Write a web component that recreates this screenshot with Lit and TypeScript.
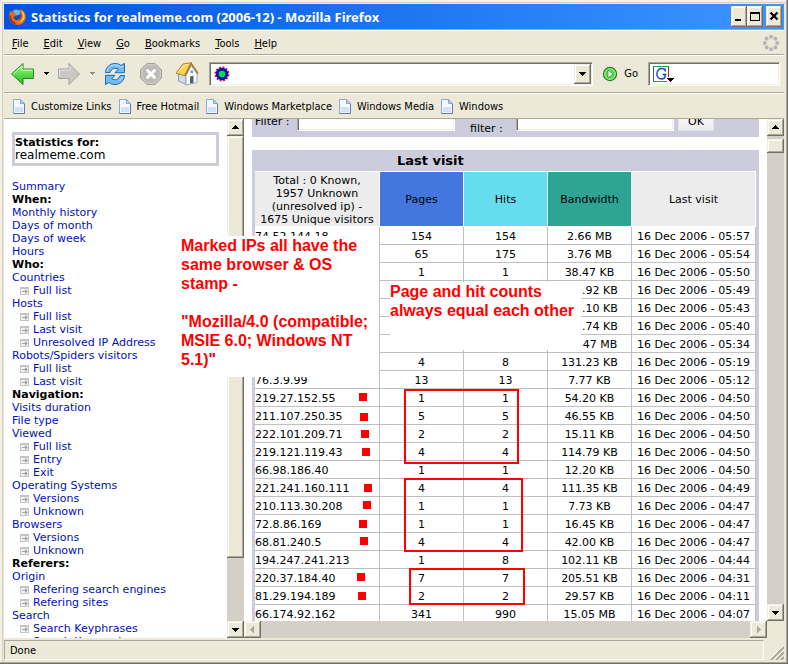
import { LitElement, html, css, svg } from "lit";
import { customElement, property } from "lit/decorators.js";
import { classMap } from "lit/directives/class-map.js";

type NavItem = { text: string; kind: "head" | "link" | "sub" };

const head = (text: string): NavItem => ({ text, kind: "head" });
const link = (text: string): NavItem => ({ text, kind: "link" });
const sub = (text: string): NavItem => ({ text, kind: "sub" });

const NAV: NavItem[] = [
  link("Summary"),
  head("When:"),
  link("Monthly history"),
  link("Days of month"),
  link("Days of week"),
  link("Hours"),
  head("Who:"),
  link("Countries"),
  sub("Full list"),
  link("Hosts"),
  sub("Full list"),
  sub("Last visit"),
  sub("Unresolved IP Address"),
  link("Robots/Spiders visitors"),
  sub("Full list"),
  sub("Last visit"),
  head("Navigation:"),
  link("Visits duration"),
  link("File type"),
  link("Viewed"),
  sub("Full list"),
  sub("Entry"),
  sub("Exit"),
  link("Operating Systems"),
  sub("Versions"),
  sub("Unknown"),
  link("Browsers"),
  sub("Versions"),
  sub("Unknown"),
  head("Referers:"),
  link("Origin"),
  sub("Refering search engines"),
  sub("Refering sites"),
  link("Search"),
  sub("Search Keyphrases"),
  sub("Search Keywords"),
];

// Figure spaces keep the digits lined up where the notes hide part of a value.
const ROWS: [string, string, string, string, string][] = [
  ["74.52.144.18", "154", "154", "2.66 MB", "05:57"],
  ["", "65", "175", "3.76 MB", "05:54"],
  ["", "1", "1", "38.47 KB", "05:50"],
  ["", "", "", "\u2007\u2007\u2007.92 KB", "05:49"],
  ["", "", "", "\u2007\u2007\u2007.10 KB", "05:43"],
  ["", "", "", "\u2007\u2007\u2007.74 KB", "05:40"],
  ["", "", "", "\u2007\u2007\u200747 MB", "05:34"],
  ["", "4", "8", "131.23 KB", "05:19"],
  ["76.3.9.99", "13", "13", "7.77 KB", "05:12"],
  ["219.27.152.55", "1", "1", "54.20 KB", "04:50"],
  ["211.107.250.35", "5", "5", "46.55 KB", "04:50"],
  ["222.101.209.71", "2", "2", "15.11 KB", "04:50"],
  ["219.121.119.43", "4", "4", "114.79 KB", "04:50"],
  ["66.98.186.40", "1", "1", "12.20 KB", "04:50"],
  ["221.241.160.111", "4", "4", "111.35 KB", "04:49"],
  ["210.113.30.208", "1", "1", "7.73 KB", "04:47"],
  ["72.8.86.169", "1", "1", "16.45 KB", "04:47"],
  ["68.81.240.5", "4", "4", "42.00 KB", "04:47"],
  ["194.247.241.213", "1", "8", "102.11 KB", "04:44"],
  ["220.37.184.40", "7", "7", "205.51 KB", "04:31"],
  ["81.29.194.189", "2", "2", "29.57 KB", "04:11"],
  ["66.174.92.162", "341", "990", "15.05 MB", "04:07"],
];

const MARKS = [
  [355, 274], [356, 294], [357, 311], [358, 329], [360, 365],
  [359, 382], [355, 401], [356, 418], [353, 454], [354, 473],
];

const BOXES = [
  [401, 271, 113, 73],
  [401, 360, 117, 72],
  [406, 450, 114, 35],
];

const raised = css`
  .raised {
    border: 0;
    padding: 0;
    margin: 0;
    background: #ece9d8;
    box-shadow: inset -1px -1px #716f64, inset 1px 1px #f1efe2,
      inset -2px -2px #aca899, inset 2px 2px #fff;
  }
`;

@customElement("scroll-bar")
export class ScrollBar extends LitElement {
  @property() axis: "x" | "y" = "y";
  @property({ type: Number }) start = 0;
  @property({ type: Number }) size = 0;

  static styles = [
    raised,
    css`
      :host { display: flex; background: #d4d0c8; flex: none; }
      :host([axis="y"]) { flex-direction: column; width: 17px; }
      :host([axis="x"]) { height: 17px; }
      button { flex: none; width: 17px; height: 17px; display: block; }
      svg { display: block; width: 17px; height: 17px; fill: #000; }
      :host([axis="x"]) svg { fill: #aca899; }
      .track { flex: 1; min-height: 0; }
    `,
  ];

  render() {
    const y = this.axis === "y";
    return html`
      <button class="raised" aria-label=${y ? "Scroll up" : "Scroll left"}>
        <svg viewBox="0 0 17 17"><path d=${y ? "M8 6h1v1h1v1h1v1h1v1H5V9h1V8h1V7h1z" : "M6 8v1h1v1h1v1h1v1h1V5H9v1H8v1H7v1z"} /></svg>
      </button>
      <div class="track">
        ${this.size
          ? html`<div class="raised" style=${`height:${this.size}%;margin-top:${this.start}px`}></div>`
          : ""}
      </div>
      <button class="raised" aria-label=${y ? "Scroll down" : "Scroll right"}>
        <svg viewBox="0 0 17 17"><path d=${y ? "M8 11h1v-1h1V9h1V8h1V7H5v1h1v1h1v1h1z" : "M11 8v1h-1v1H9v1H8v1H7V5h1v1h1v1h1v1z"} /></svg>
      </button>
    `;
  }
}

const firefox = svg`
  <circle cx="7.500" cy="7.500" r="7" fill="#1f4aa8"/>
  <path d="M3.500 2.600a6.500 6.500 0 0 1 7.500.2L10.500 6 6 7.200z" fill="#6db6ee"/>
  <path d="M.8 2.800l1.700 1L4 2.500l.3 2.300L6.800 6 5.600 7.500 4.300 8.600c.3 2.400 3 3.400 5 2.300 2.300-1.100 2.800-3.300 2-6.200L10 1.200C13.500 1.600 16 5 15.800 8.600 15.500 12.900 12 16 8 16 3.500 16 .1 12.500.1 8.300.1 6.500.1 5 .8 2.800z" fill="#e66b12"/>
  <path d="M11.200 1.800c3.500 2 4.600 6.500 2.400 9.600-1.500 2.100-3.600 3-5.600 2.700 3.200-.8 5-2.900 5-6 0-2.300-.6-4.400-1.800-6.300z" fill="#ffd24a"/>
  <path d="M1.200 7c-.2 3.500 1.500 6.500 4.800 7.800" stroke="#9c2a0b" stroke-width="1.400" fill="none"/>`;

const page = svg`
  <path d="M1.500.5h7l4 4v10h-11z" fill="#f4f8ff" stroke="#8aa8da"/>
  <path d="M3 8h8v5H3z" fill="#d3e1fa"/>
  <path d="M8.500.5v4h4z" fill="#b7cdf3" stroke="#8aa8da"/>
  <path d="M12.500 5v9.500h-11" fill="none" stroke="#6079b4"/>`;

@customElement("app-root")
export class AppRoot extends LitElement {
  static styles = [
    raised,
    css`
      :host { display: block; }
      * { box-sizing: border-box; }
      svg { display: block; flex: none; }
      button { font: inherit; color: inherit; }
      a { color: inherit; text-decoration: none; }
      .window {
        height: 100vh;
        min-height: 480px;
        display: flex;
        flex-direction: column;
        padding: 4px;
        background: #ece9d8;
        box-shadow: inset -1px -1px #716f64, inset -2px -2px #aca899,
          inset 2px 2px #f3f1e6, inset 3px 3px #d4d0bc;
        font: 11px/13px "DejaVu Sans Condensed", "DejaVu Sans", sans-serif;
        color: #000;
      }
      .title {
        flex: none;
        height: 25px;
        display: flex;
        align-items: center;
        padding: 0 2px 0 5px;
        background: linear-gradient(90deg, #0054e3, #3d95ff);
        color: #fff;
        font: bold 13px/16px "Noto Sans", sans-serif;
      }
      .title h1 { flex: 1; margin: 0 0 0 5px; font: inherit; white-space: nowrap; }
      .wbtn { width: 16px; height: 21px; }
      .close { margin-left: 3px; }
      .bar {
        flex: none;
        display: flex;
        align-items: center;
        border-bottom: 1px solid #aca899;
        box-shadow: inset 0 1px #fff;
        white-space: nowrap;
      }
      .menu { height: 26px; padding: 2px 4px 0 8px; gap: 15px; border-top: 1px solid #aca899; }
      .menu button { border: 0; padding: 0; background: none; }
      .first { text-decoration: underline; }
      .spacer { flex: 1; }
      .nav { height: 38px; padding: 0 4px 0 7px; }
      .icon { border: 0; padding: 0; background: none; flex: none; }
      .drop { width: 22px; display: flex; justify-content: center; }
      .reload { margin-right: 12px; }
      .stop { margin-right: 12px; }
      .home { margin-right: 10px; }
      .field {
        display: flex;
        align-items: center;
        height: 24px;
        background: #fff;
        border: 1px solid;
        border-color: #aca899 #fff #fff #aca899;
        box-shadow: inset 1px 1px #716f64, inset -1px -1px #f1efe2;
      }
      .field input { flex: 1; min-width: 0; border: 0; background: none; font: inherit; outline: 0; }
      .url { flex: 1; padding: 1px 1px 1px 4px; }
      .url .raised { width: 17px; height: 20px; display: flex; align-items: center; justify-content: center; }
      .go { display: flex; align-items: center; gap: 6px; margin: 0 10px 0 9px; }
      .search { width: 132px; padding-left: 4px; }
      .links { height: 26px; padding: 2px 8px 0; gap: 6px; }
      .links a { display: flex; align-items: center; gap: 6px; }
      .content { position: relative; flex: 1; min-height: 0; display: flex; background: #fff; }
      .left { width: 240px; flex: none; display: flex; }
      .side {
        flex: 1;
        overflow: hidden;
        padding: 13px 8px 0;
        font: 11px/13px "DejaVu Sans", sans-serif;
      }
      .site {
        border: 3px solid #ccccdd;
        height: 34px;
        padding: 1px 0 0;
        margin-bottom: 14px;
        font-size: 12px;
      }
      .site b { display: block; font-size: 11px; }
      .side ul { list-style: none; margin: 0; padding: 0; white-space: nowrap; }
      .side li { display: flex; align-items: center; height: 13px; color: #0011bb; }
      .side .head { color: #000; font-weight: bold; }
      .side .sub { padding-left: 8px; gap: 4px; }
      .right { flex: 1; min-width: 0; display: flex; }
      .vbar { flex: none; display: flex; padding-bottom: 17px; background: #ece9d8; }
      .view { flex: 1; min-width: 0; display: flex; flex-direction: column; }
      .doc {
        flex: 1;
        min-height: 0;
        overflow: hidden;
        padding: 0 8px;
        font: 11px/13px "DejaVu Sans", sans-serif;
      }
      .filter {
        display: flex;
        align-items: flex-end;
        height: 18px;
        padding: 0 3px 6px;
        margin-bottom: 13px;
        background: #ccccdd;
        white-space: nowrap;
      }
      .filter label { flex: none; }
      .filter input {
        width: 158px;
        height: 22px;
        flex: none;
        border: 1px solid;
        border-color: #aca899 #fff #fff #aca899;
        box-shadow: inset 1px 1px #716f64, inset -1px -1px #f1efe2;
        background: #fff;
      }
      .lab1 { width: 42px; margin-bottom: 3px; }
      .lab2 { width: 46px; margin: 0 0 -4px 15px; }
      .ok {
        width: 36px;
        height: 22px;
        margin-left: 4px;
        padding: 4px 0 2px;
        border: 1px solid #dde3ea;
        background: linear-gradient(#fff, #ececf0);
        flex: none;
      }
      .panel { background: #ccccdd; padding: 0 3px 3px; }
      .panel h2 { margin: 0; width: 70%; height: 21px; font: bold 13px/21px "DejaVu Sans", sans-serif; text-align: center; }
      table { width: 100%; table-layout: fixed; border-collapse: separate; border-spacing: 0; background: #fff; }
      th {
        height: 56px;
        padding: 1px 0 0;
        font-weight: normal;
        border-top: 1px solid #fff;
        border-right: 1px solid #fff;
        border-bottom: 1px solid #fff;
        background: #ececec;
      }
      .c-host { width: 125px; }
      .c-num { width: 84px; }
      .c-date { width: 124px; }
      .pages { background: #4477dd; }
      .hits { background: #66ddee; }
      .bw { background: #2ea495; }
      td {
        height: 18px;
        padding: 2px 0 0;
        line-height: 15px;
        text-align: center;
        white-space: nowrap;
        border-right: 1px solid #c0c0c0;
        border-bottom: 1px solid #c0c0c0;
      }
      .host { text-align: left; }
      .note {
        position: absolute;
        background: #fff;
        color: #ff0000;
        font: bold 16px/19px "Liberation Sans", Arial, sans-serif;
      }
      .note p { margin: 0 0 19px; }
      .n1 { left: 174px; top: 117px; width: 201px; height: 141px; padding: 0 0 0 3px; }
      .n2 { left: 386px; top: 163px; width: 191px; height: 68px; white-space: nowrap; }
      .marks { position: absolute; left: 0; top: 0; pointer-events: none; }
      .status { flex: none; height: 22px; display: flex; padding-top: 2px; }
      .status p {
        flex: 1;
        margin: 0;
        padding: 3px 5px 0;
        border: 1px solid;
        border-color: #aca899 #fff #fff #aca899;
      }
      .grip { align-self: flex-end; margin-left: 6px; }
    `,
  ];

  private menu(name: string) {
    return html`<button><span class="first">${name[0]}</span>${name.slice(1)}</button>`;
  }

  private chrome() {
    return html`
      <header class="title">
        <svg width="17" height="17" viewBox="0 0 16 16">${firefox}</svg>
        <h1>Statistics for realmeme.com (2006-12) - Mozilla Firefox</h1>
        <button class="raised wbtn" aria-label="Minimize">
          <svg width="16" height="21"><path d="M4 13h6v2H4z" /></svg>
        </button>
        <button class="raised wbtn" aria-label="Maximize">
          <svg width="16" height="21"><path d="M3 6h10v9H3zM4 8v6h8V8z" fill-rule="evenodd" /></svg>
        </button>
        <button class="raised wbtn close" aria-label="Close">
          <svg width="16" height="21"><path d="M4.500 6.500l7 7M11.500 6.500l-7 7" stroke="#000" stroke-width="2.200" /></svg>
        </button>
      </header>
      <nav class="bar menu">
        ${["File", "Edit", "View", "Go", "Bookmarks", "Tools", "Help"].map((m) => this.menu(m))}
        <span class="spacer"></span>
        <svg width="18" height="18" viewBox="-9 -9 18 18" fill="#b5b5b5">
          ${[0, 45, 90, 135, 180, 225, 270, 315].map((a) => svg`<circle cx="0" cy="-6.200" r="2" transform=${`rotate(${a})`} />`)}
        </svg>
      </nav>
      <div class="bar nav">
        <button class="icon" aria-label="Back">
          <svg width="24" height="24" viewBox="0 0 24 24">
            <defs><linearGradient id="g" x1="0" y1="0" x2="0" y2="1"><stop offset="0" stop-color="#b6f5a0" /><stop offset=".5" stop-color="#5fdc4e" /><stop offset="1" stop-color="#27b51d" /></linearGradient></defs>
            <path d="M.5 12L12 1.500V7h10.500v9.500H12v6z" fill="url(#g)" stroke="#1d8c1a" />
            <path d="M2.500 12L11 4v4.200h10.500" fill="none" stroke="#d9ffd0" />
          </svg>
        </button>
        <button class="icon drop" aria-label="Back history"><svg width="5" height="3"><path d="M0 0h5v1H4v1H3v1H2V2H1V1H0z" /></svg></button>
        <button class="icon" aria-label="Forward">
          <svg width="24" height="24" viewBox="0 0 24 24">
            <path d="M22.500 12L12 1.500V7H1.500v9.500H12v6z" fill="#c9c8c3" stroke="#a3a29c" />
            <path d="M2.500 15V8.200H13V4" fill="none" stroke="#e4e3de" />
          </svg>
        </button>
        <button class="icon drop" aria-label="Forward history"><svg width="5" height="3" fill="#8f8e88"><path d="M0 0h5v1H4v1H3v1H2V2H1V1H0z" /></svg></button>
        <button class="icon reload" aria-label="Reload">
          <svg width="24" height="24" viewBox="0 0 24 24" fill="#6fbdf2" stroke="#1f66b8" stroke-linejoin="round">
            <path d="M2.500 10.500C3 5 7 1.500 12 1.500c2.600 0 4.400.7 6 2l3.500-2.200v9.400H12l3.300-3.300C12 5.200 8 6.500 7 10.500z" />
            <path d="M21.500 13.500C21 19 17 22.500 12 22.500c-2.600 0-4.400-.7-6-2l-3.500 2.200v-9.400H12l-3.300 3.300c3.300 2.200 7.300.9 8.300-3.100z" />
            <path d="M4 9.500C5 5 8 3 12 3c2.500 0 4.500.8 6 2.300l2-1.300M20 14.500c-1 2-2 3-3.500 4" fill="none" stroke="#c4e8ff" />
          </svg>
        </button>
        <button class="icon stop" aria-label="Stop">
          <svg width="24" height="24" viewBox="0 0 24 24">
            <path d="M8 1.500h8L22.500 8v8L16 22.500H8L1.500 16V8z" fill="#bcbbb7" stroke="#a09f9a" />
            <path d="M8.300 2.800h7.400l5.500 5.500v7.400l-5.500 5.500H8.300l-5.500-5.500V8.300z" fill="none" stroke="#d2d1cd" />
            <path d="M8.500 8.500l7 7M15.500 8.500l-7 7" stroke="#fff" stroke-width="3" stroke-linecap="round" />
          </svg>
        </button>
        <button class="icon home" aria-label="Home">
          <svg width="24" height="24" viewBox="0 0 24 24">
            <path d="M3.500 11v8l7.500 3.500V13z" fill="#d3dbec" stroke="#8e98ae" />
            <path d="M11 13l5.500-9 5.500 8v8.500l-11 2.500z" fill="#fbfcff" stroke="#a2aabc" />
            <path d="M1 11L8 2l8-1.200-6.500 13z" fill="#f7d257" stroke="#b1851b" />
            <path d="M3 10.500L8.800 3.300l5-.8" fill="none" stroke="#fff0a8" />
            <path d="M10 14L16.200 1.500 23 11.500" fill="none" stroke="#a9791c" stroke-width="1.500" />
            <path d="M15 14.500l3.500-.7v7L15 21.500z" fill="#565b6e" />
            <path d="M15.500 8.500h2.500v2.500h-2.500z" fill="#4e9ae6" />
          </svg>
        </button>
        <div class="field url">
          <svg width="16" height="16" viewBox="-8 -8 16 16">
            ${[0, 30, 60, 90, 120, 150].map((a) => svg`<path d="M-1 -7.500h2v15h-2z" fill="#e0102a" transform=${`rotate(${a + 12})`} />`)}
            <circle r="6.200" fill="#0a12c8" /><circle r="3.300" fill="#0be02a" />
          </svg>
          <input aria-label="Address" />
          <button class="raised" aria-label="Show history"><svg width="7" height="4"><path d="M0 0h7v1H6v1H5v1H4v1H3V3H2V2H1V1H0z" /></svg></button>
        </div>
        <button class="icon go">
          <svg width="16" height="16" viewBox="0 0 16 16">
            <circle cx="8" cy="8" r="6.500" fill="#5bd84c" stroke="#1d8020" stroke-width="1.300" />
            <circle cx="8" cy="8" r="5.300" fill="none" stroke="#a9f29a" />
            <path d="M6 4l5 4-5 4z" fill="#fff" stroke="#2b9a2b" stroke-width=".8" />
          </svg>
          Go
        </button>
        <div class="field search">
          <svg width="22" height="18" viewBox="0 0 22 18">
            <path d="M.5 16V1" stroke="#2a56c8" /><path d="M0 1.500h16M0 16.500h14" stroke="#23a53a" /><path d="M15.500 2v10" stroke="#d81e1e" />
            <path d="M12.200 6.500V3.500M12 5C10.500 3.200 7.500 3 5.500 4.700 3.300 7 3.300 10.500 5.300 12.700c2 1.800 5.200 1.600 6.700-.2V9.500H9.500h4" fill="none" stroke="#1d3fc0" stroke-width="1.400" />
            <path d="M14 13h7v1h-1v1h-1v1h-1v1h-1v-1h-1v-1h-1v-1h-1z" />
          </svg>
          <input aria-label="Search" />
        </div>
      </div>
      <nav class="bar links">
        ${["Customize Links", "Free Hotmail", "Windows Marketplace", "Windows Media", "Windows"].map(
          (t) => html`<a href="#"><svg width="13" height="15" viewBox="0 0 13 15">${page}</svg>${t}</a>`
        )}
      </nav>
    `;
  }

  private sidebar() {
    return html`
      <div class="left">
        <div class="side">
          <div class="site"><b>Statistics for:</b>realmeme.com</div>
          <ul>
            ${NAV.map(
              (n) => html`<li class=${classMap({ [n.kind]: true })}>
                ${n.kind === "sub"
                  ? html`<svg width="9" height="8" viewBox="0 0 9 8"><path d="M0 0h9v8H0z" fill="#c4c4c4" /><path d="M1 2h7v5H1z" fill="#f2f2f2" /><path d="M2 4h3V2l3 2.500L5 7V5H2z" fill="#a4a4a4" /></svg>`
                  : ""}
                ${n.kind === "head" ? n.text : html`<a href="#">${n.text}</a>`}
              </li>`
            )}
          </ul>
        </div>
        <scroll-bar axis="y" size="87"></scroll-bar>
      </div>
    `;
  }

  private report() {
    return html`
      <div class="view">
        <div class="doc">
          <form class="filter">
            <label class="lab1" for="f1">Filter :</label><input id="f1" />
            <label class="lab2" for="f2">filter :</label><input id="f2" />
            <button class="ok" type="button">OK</button>
          </form>
          <section class="panel">
            <h2>Last visit</h2>
            <table>
              <thead>
                <tr>
                  <th class="c-host">Total : 0 Known,<br />1957 Unknown<br />(unresolved ip) -<br />1675 Unique visitors</th>
                  <th class="c-num pages">Pages</th>
                  <th class="c-num hits">Hits</th>
                  <th class="c-num bw">Bandwidth</th>
                  <th class="c-date">Last visit</th>
                </tr>
              </thead>
              <tbody>
                ${ROWS.map(
                  ([host, pages, hits, bw, time]) => html`<tr>
                    <td class="host">${host}</td>
                    <td>${pages}</td>
                    <td>${hits}</td>
                    <td>${bw}</td>
                    <td>16 Dec 2006 - ${time}</td>
                  </tr>`
                )}
              </tbody>
            </table>
          </section>
        </div>
        <scroll-bar axis="x"></scroll-bar>
      </div>
    `;
  }

  render() {
    return html`
      <div class="window">
        ${this.chrome()}
        <main class="content">
          ${this.sidebar()}
          <div class="right">
            ${this.report()}
            <div class="vbar"><scroll-bar axis="y" start="3" size="3"></scroll-bar></div>
          </div>
          <div class="note n1">
            <p>Marked IPs all have the same browser &amp; OS stamp -</p>
            <p>"Mozilla/4.0 (compatible; MSIE 6.0; Windows NT 5.1)"</p>
          </div>
          <div class="note n2">Page and hit counts<br />always equal each other</div>
          <svg class="marks" width="540" height="500">
            ${MARKS.map(([x, y]) => svg`<rect x=${x} y=${y} width="8" height="8" fill="#f00" />`)}
            ${BOXES.map(([x, y, w, h]) => svg`<rect x=${x} y=${y} width=${w} height=${h} fill="none" stroke="#f00" stroke-width="2" />`)}
          </svg>
        </main>
        <footer class="status">
          <p>Done</p>
          <svg class="grip" width="14" height="14"><path d="M1 14L14 1M6 14l8-8M11 14l3-3" stroke="#aca899" stroke-width="2" /><path d="M0 13L13 0M5 13l8-8" stroke="#fff" /></svg>
        </footer>
      </div>
    `;
  }
}
